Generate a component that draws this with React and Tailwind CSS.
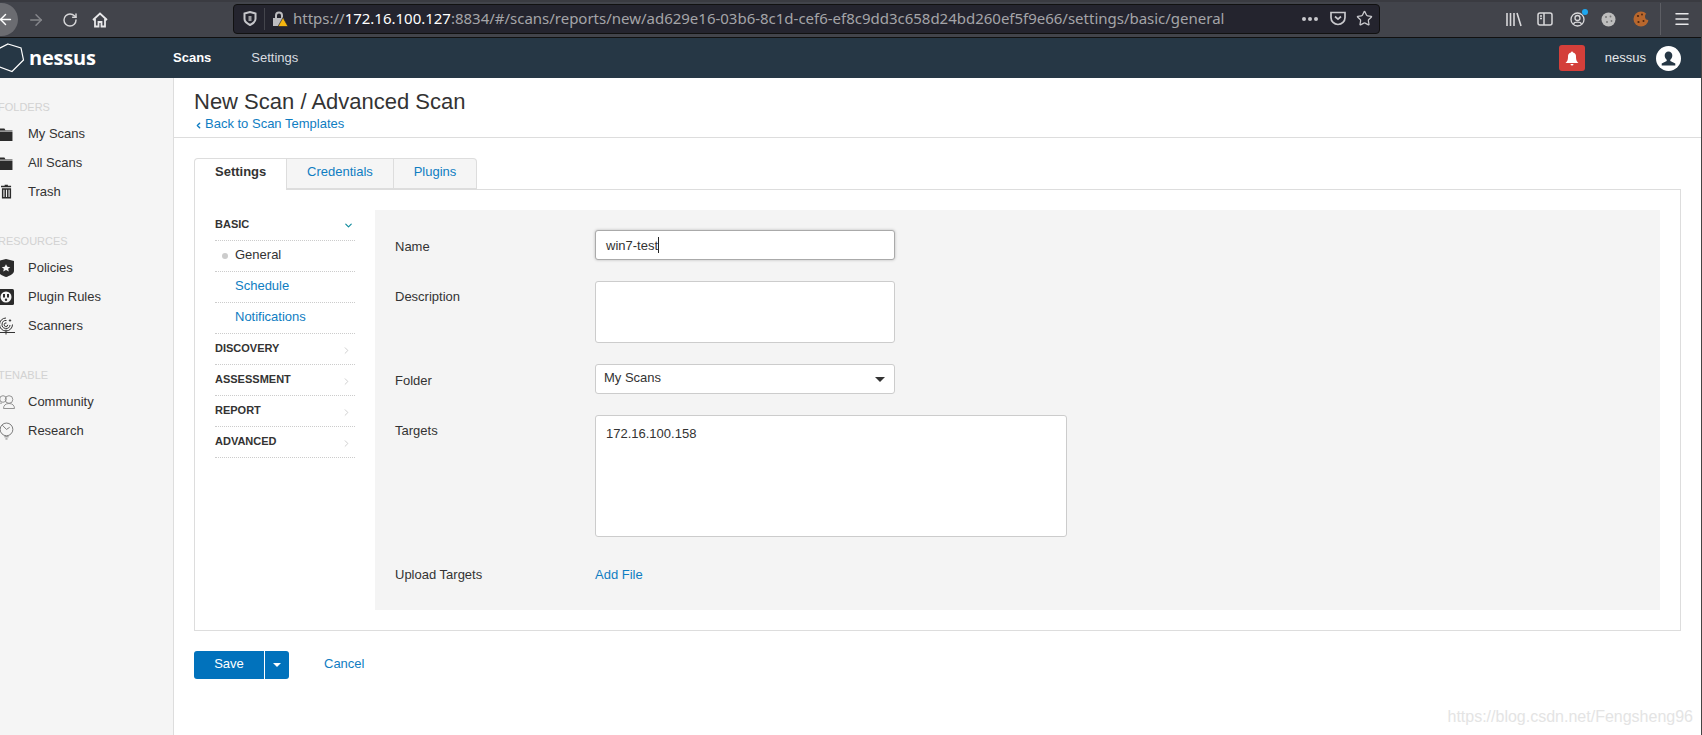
import React from 'react';
import { ArrowLeft, ArrowRight, RotateCw, Star, ChevronRight, ChevronDown, ChevronLeft, Menu } from 'lucide-react';

const font = "font-['Liberation_Sans',Arial,sans-serif]";

const HexLogo = () => (
  <svg width="25" height="30" viewBox="0 0 25 30" fill="none" stroke="#fff" strokeWidth="1.2">
    <path d="M8 1 L21 5 L23.5 17 L12 28.5 L-6 22 L-6 8 Z" />
  </svg>
);

const FolderIcon = () => (
  <svg width="14" height="14" viewBox="0 0 13 13" fill="#2b2b2b">
    <path d="M0 1.5h5l1 1.5h6.5v10H0z" />
    <rect x="0" y="3.4" width="13" height="0.8" fill="#f5f5f5" />
  </svg>
);

const TrashIcon = () => (
  <svg width="11" height="15" viewBox="0 0 12 15" fill="#2b2b2b">
    <path d="M4 0h3.500v1.200H11v1.600H0V1.200h4z" />
    <path d="M1 4h10v11H1zM2.600 5.500v8h1.200v-8zM5.400 5.500v8h1.200v-8zM8.200 5.500v8h1.200v-8z" fillRule="evenodd" />
  </svg>
);

const ShieldIcon = () => (
  <svg width="16" height="18" viewBox="0 0 13 17" preserveAspectRatio="none">
    <path d="M6.500 0 L13 2 V11 C13 14 9 16 6.500 17 C4 16 0 14 0 11 V2 Z" fill="#2b2b2b" />
    <path d="M6.500 5 L7.600 7.400 L10 7.700 L8.200 9.300 L8.800 11.800 L6.500 10.500 L4.200 11.800 L4.800 9.300 L3 7.700 L5.400 7.400 Z" fill="#f5f5f5" />
  </svg>
);

const PlugIcon = () => (
  <svg width="16" height="16" viewBox="0 0 16 16">
    <rect x="0" y="0" width="16" height="16" rx="1.500" fill="#2b2b2b" />
    <circle cx="8" cy="8" r="5.500" fill="#f5f5f5" />
    <rect x="5" y="5" width="2" height="3.500" fill="#2b2b2b" />
    <rect x="9" y="5" width="2" height="3.500" fill="#2b2b2b" />
    <circle cx="8" cy="10.800" r="1.200" fill="#2b2b2b" />
  </svg>
);

const RadarIcon = () => (
  <svg width="18" height="18" viewBox="0 0 18 18" fill="none" stroke="#333" strokeWidth="1">
    <path d="M9 1 A6.500 6.500 0 1 0 15.500 7.500" />
    <path d="M9.500 3.500 A4 4 0 1 0 13 8" />
    <path d="M9.500 6 A1.800 1.800 0 1 0 10.800 7.800" />
    <path d="M0 15.500h18M9 12.500v5" />
    <circle cx="13" cy="3.500" r="0.700" fill="#333" />
  </svg>
);

const PeopleIcon = () => (
  <svg width="18" height="14" viewBox="0 0 18 14" fill="none" stroke="#888" strokeWidth="0.900">
    <circle cx="6" cy="4" r="3.300" />
    <circle cx="12" cy="4.500" r="3.800" />
    <path d="M0.500 12.500c0-3 2-4.500 4.500-4.500M6.500 13.500c0-3 2-5 5.500-5s5.500 2 5.500 5z" />
  </svg>
);

const BulbIcon = () => (
  <svg width="15" height="18" viewBox="0 0 14 17" fill="none" stroke="#777" strokeWidth="0.900">
    <circle cx="7" cy="7" r="6" />
    <path d="M3 3l4 4 3-2M5 14h4M6 16h2" />
  </svg>
);

const SidebarHeading = ({ children, className }) => (
  <div className={`text-[11px] leading-4 text-[#d2d2d2] -ml-[2px] ${className}`}>{children}</div>
);

const SidebarItem = ({ icon, label }) => (
  <div className="flex items-center h-[29px] text-[13px] text-[#333]">
    <span className="w-[28px] -ml-[8px] flex justify-center items-center shrink-0">{icon}</span>
    <span className="ml-[8px]">{label}</span>
  </div>
);

const MenuHead = ({ label, open }) => (
  <div className="h-[31px] flex items-center justify-between border-b border-dotted border-[#ccc] font-bold text-[11px] text-[#333]">
    <span className="-mt-[1px]">{label}</span>
    {open
      ? <ChevronDown size={11} strokeWidth={2.5} className="text-[#0e8a9c] mr-[1px] mt-[1px]" />
      : <ChevronRight size={11} strokeWidth={2} className="text-[#ccc] mr-[3px] mt-[2px]" />}
  </div>
);

const MenuItem = ({ label, active }) => (
  <div className={`h-[31px] flex items-center border-b border-dotted border-[#ccc] text-[13px] ${active ? 'text-[#333]' : 'text-[#0f7dc2]'}`}>
    <span className="w-[20px] flex justify-center">
      {active && <span className="w-[6px] h-[6px] rounded-full bg-[#ccc]" />}
    </span>
    <span className="-mt-[3px]">{label}</span>
  </div>
);

const Tab = ({ label, active, w }) => (
  <div className={`${w} h-[31px] flex items-center justify-center text-[13px] border-t border-r border-[#ddd] first:border-l first:rounded-tl first:justify-start last:rounded-tr ${active ? 'bg-white font-bold text-[#333] h-[32px] -mb-px z-10 pl-[20px]' : 'bg-[#f5f5f5] text-[#0f7dc2] border-b'}`}>
    <span className={active ? '-mt-[5px]' : '-mt-[3px]'}>{label}</span>
  </div>
);

const FormRow = ({ label, mb, labelClass = 'pt-[7px]', children }) => (
  <div className={`flex ${mb}`}>
    <div className={`w-[200px] text-[13px] text-[#333] ${labelClass}`}>{label}</div>
    {children}
  </div>
);

export default function App() {
  return (
    <div className={`${font} w-full h-[735px] overflow-hidden flex flex-col bg-white border-r border-[#444]`}>
      {/* Firefox toolbar */}
      <div className="h-[38px] shrink-0 bg-[#42444b] border-t-2 border-b border-t-[#3a3b41] border-b-[#111] flex items-center text-[#d6d6d8]">
        <div className="w-[36px] h-[33px] -ml-[18px] rounded-full bg-[#6b6c71] flex items-center justify-end pr-[7px] shrink-0 -mt-[1px]">
          <ArrowLeft size={17} className="text-white -mr-[3px]" />
        </div>
        <ArrowRight size={18} className="text-[#85868b] ml-[9px]" />
        <RotateCw size={16} strokeWidth={2.2} className="ml-[17px]" />
        <svg width="16" height="16" viewBox="0 0 16 16" fill="none" stroke="#e8e8ea" strokeWidth="1.800" className="ml-[14px]">
          <path d="M1 8 L8 1.500 L15 8 M3 7v7.500h3.500V10h3v4.500H13V7" />
        </svg>
        <div className="ml-[125px] w-[1147px] h-[30px] -mt-[2px] bg-[#24242e] border border-[#111] rounded-[4px] flex items-center shrink-0">
          <svg width="14" height="15" viewBox="0 0 14 15" className="ml-[9px] shrink-0" fill="none" stroke="#c6c6ca" strokeWidth="2">
            <path d="M1.500 2.500 L7 1 L12.500 2.500 V8 C12.500 11 9 13 7 14 C5 13 1.500 11 1.500 8 Z" />
            <path d="M7 5v5" strokeWidth="3" stroke="#9a9a9e" />
          </svg>
          <span className="ml-[7px] w-px h-[22px] bg-[#44454c]" />
          <span className="relative ml-[7px] w-[16px] h-[16px] shrink-0">
            <svg width="16" height="16" viewBox="0 0 16 16">
              <path d="M3 7V4.500a4 4 0 0 1 8 0V7h1v8H1V7z M5 7h4V4.500a2 2 0 0 0-4 0z" fill="#bdbdc0" fillRule="evenodd" />
              <path d="M11 6.500 L16 15.500 H6 Z" fill="#f5b50f" stroke="#24242e" strokeWidth="0.700" />
            </svg>
          </span>
          <div className="ml-[5px] font-['Noto_Sans',sans-serif] text-[15px] tracking-[-0.01px] text-[#a4a4a8] whitespace-nowrap">
            https://<span className="text-white">172.16.100.127</span>:8834/#/scans/reports/new/ad629e16-03b6-8c1d-cef6-ef8c9dd3c658d24bd260ef5f9e66/settings/basic/general
          </div>
          <div className="ml-auto flex items-center shrink-0">
            <span className="flex gap-[2px] mr-[12px]">
              <i className="w-[4px] h-[4px] rounded-full bg-[#c8c8cc]" />
              <i className="w-[4px] h-[4px] rounded-full bg-[#c8c8cc]" />
              <i className="w-[4px] h-[4px] rounded-full bg-[#c8c8cc]" />
            </span>
            <svg width="16" height="15" viewBox="0 0 16 15" fill="none" stroke="#c8c8cc" strokeWidth="1.700" className="mr-[10px]">
              <path d="M1 1.500h14v5a7 7 0 0 1-14 0z" />
              <path d="M5 5.500l3 2.700 3-2.700" />
            </svg>
            <Star size={17} strokeWidth={1.8} className="text-[#c8c8cc] mr-[6px]" />
          </div>
        </div>
        <div className="flex-1 flex items-center justify-end relative h-[32px]">
          <svg width="16" height="15" viewBox="0 0 16 15" fill="none" stroke="#d8d8da" strokeWidth="1.600" className="absolute left-[126px] top-[8px]">
            <path d="M1 1v13M4.500 1v13M8 1v13M11 1l4 13" />
          </svg>
          <svg width="16" height="14" viewBox="0 0 16 14" fill="none" stroke="#d8d8da" strokeWidth="1.500" className="absolute left-[157px] top-[8px]">
            <rect x="1" y="1" width="14" height="12" rx="2" />
            <path d="M7 1v12M3 4h2M3 6.500h2" />
          </svg>
          <svg width="15" height="15" viewBox="0 0 15 15" fill="none" stroke="#d8d8da" strokeWidth="1.300" className="absolute left-[190px] top-[8px]">
            <circle cx="7.500" cy="7.500" r="6.500" />
            <circle cx="7.500" cy="6" r="2.500" />
            <path d="M3.500 12c1-2.500 7-2.500 8 0" />
          </svg>
          <span className="absolute left-[202px] top-[5px] w-[6px] h-[6px] rounded-full bg-[#1ea7ef]" />
          <svg width="15" height="15" viewBox="0 0 15 15" className="absolute left-[221px] top-[8px]">
            <circle cx="7.500" cy="7.500" r="7" fill="#bdbdbd" />
            <circle cx="5" cy="5" r="1" fill="#777" />
            <circle cx="9.500" cy="4.500" r="0.900" fill="#777" />
            <circle cx="6" cy="10" r="1" fill="#777" />
            <circle cx="10.500" cy="9" r="0.900" fill="#777" />
          </svg>
          <svg width="16" height="16" viewBox="0 0 16 16" className="absolute left-[253px] top-[7px]">
            <circle cx="8" cy="8" r="7.500" fill="#b8672d" />
            <circle cx="15.500" cy="5.500" r="3.500" fill="#42444b" />
            <circle cx="5" cy="5" r="1.100" fill="#4a2510" />
            <circle cx="9" cy="3.500" r="0.900" fill="#4a2510" />
            <circle cx="5.500" cy="11" r="1.100" fill="#4a2510" />
            <circle cx="10.500" cy="10" r="1" fill="#4a2510" />
          </svg>
          <span className="w-px h-[32px] bg-[#5d5e64] mr-[40px] -mt-[1px]" />
          <Menu size={18} strokeWidth={2} className="text-[#e8e8ea] mr-[10px] absolute right-0 top-[6px]" />
        </div>
      </div>

      {/* Nessus nav bar */}
      <div className="h-[40px] shrink-0 bg-[#263745] flex items-center relative">
        <div className="w-[173px] flex items-center shrink-0">
          <HexLogo />
          <span className="font-['Open_Sans',sans-serif] font-bold text-[20px] leading-none text-white ml-[4px] -mt-[1px] tracking-[-0.2px]">nessus</span>
        </div>
        <span className="text-[13px] font-bold text-white -mt-[1px]">Scans</span>
        <span className="text-[13px] text-[#d9dde0] ml-[40px]">Settings</span>
        <div className="ml-auto flex items-center mr-[20px]">
          <div className="w-[26px] h-[26px] rounded-[3px] bg-[#d43f3a] flex items-center justify-center">
            <svg width="14" height="15" viewBox="0 0 14 15" fill="#fff">
              <path d="M7 0.500a1 1 0 0 1 1 1 4 4 0 0 1 3 4c0 4 1 5 2.500 6.500h-13C2 10.500 3 9.500 3 5.500a4 4 0 0 1 3-4 1 1 0 0 1 1-1z" />
              <path d="M5.500 13h3a1.500 1.500 0 0 1-3 0z" />
            </svg>
          </div>
          <span className="text-[13px] text-[#e6e9eb] ml-[20px]">nessus</span>
          <div className="w-[25px] h-[25px] rounded-full bg-white ml-[10px] flex items-center justify-center overflow-hidden">
            <svg width="15" height="15" viewBox="0 0 15 15" fill="#263745">
              <path d="M7.500 0.500a3.800 3.800 0 0 1 3.800 4c0 2-1 3.500-2 4.200v1.300l5 2.500v2H0.700v-2l5-2.500V8.700c-1-0.700-2-2.200-2-4.200a3.800 3.800 0 0 1 3.800-4z" />
            </svg>
          </div>
        </div>
      </div>

      <div className="flex-1 flex min-h-0">
        {/* Left sidebar */}
        <aside className="w-[174px] shrink-0 bg-[#f5f5f5] border-r border-[#ddd] pt-[21px]">
          <SidebarHeading className="mb-[4px]">FOLDERS</SidebarHeading>
          <SidebarItem icon={<FolderIcon />} label="My Scans" />
          <SidebarItem icon={<FolderIcon />} label="All Scans" />
          <SidebarItem icon={<TrashIcon />} label="Trash" />
          <SidebarHeading className="mt-[27px] mb-[4px]">RESOURCES</SidebarHeading>
          <SidebarItem icon={<ShieldIcon />} label="Policies" />
          <SidebarItem icon={<PlugIcon />} label="Plugin Rules" />
          <SidebarItem icon={<RadarIcon />} label="Scanners" />
          <SidebarHeading className="mt-[27px] mb-[4px]">TENABLE</SidebarHeading>
          <SidebarItem icon={<PeopleIcon />} label="Community" />
          <SidebarItem icon={<BulbIcon />} label="Research" />
        </aside>

        {/* Main content */}
        <main className="flex-1 min-w-0 relative">
          <div className="h-[60px] border-b border-[#ddd] pl-[20px] pt-[10px]">
            <h1 className="text-[22px] leading-[28px] text-[#333]">New Scan / Advanced Scan</h1>
            <div className="flex items-center text-[13px] leading-[16px] text-[#0f7dc2]">
              <ChevronLeft size={9} strokeWidth={4} className="mr-[2px] mt-[2px]" />
              Back to Scan Templates
            </div>
          </div>

          <div className="pl-[20px] pr-[20px] pt-[20px]">
            <div className="flex">
              <Tab label="Settings" active w="w-[93px]" />
              <Tab label="Credentials" w="w-[107px]" />
              <Tab label="Plugins" w="w-[83px]" />
            </div>
            <div className="border border-[#ddd] h-[442px] pl-[20px] pr-[20px] pt-[20px] flex">
              {/* Section menu */}
              <div className="w-[140px] shrink-0">
                <MenuHead label="BASIC" open />
                <MenuItem label="General" active />
                <MenuItem label="Schedule" />
                <MenuItem label="Notifications" />
                <MenuHead label="DISCOVERY" />
                <MenuHead label="ASSESSMENT" />
                <MenuHead label="REPORT" />
                <MenuHead label="ADVANCED" />
              </div>

              {/* Form panel */}
              <div className="ml-[20px] flex-1 h-[400px] bg-[#f4f4f4] pl-[20px] pt-[20px]">
                <FormRow label="Name" mb="mb-[21px]">
                  <div className="w-[300px] h-[30px] bg-white border border-[#aaa] rounded-[3px] shadow-[0_0_3px_rgba(0,0,0,0.25)] pl-[10px] text-[13px] leading-[27px] text-[#333] flex items-center">
                    win7-test<span className="w-px h-[16px] bg-[#222]" />
                  </div>
                </FormRow>
                <FormRow label="Description" mb="mb-[21px]" labelClass="pt-[6px]">
                  <div className="w-[300px] h-[62px] bg-white border border-[#ccc] rounded-[3px]" />
                </FormRow>
                <FormRow label="Folder" mb="mb-[21px]">
                  <div className="w-[300px] h-[30px] bg-white border border-[#ccc] rounded-[3px] pl-[8px] pr-[9px] text-[13px] text-[#333] flex items-center justify-between">
                    <span className="-mt-[3px]">My Scans</span>
                    <span className="w-0 h-0 border-x-[5px] border-x-transparent border-t-[5px] border-t-[#333] mt-[1px]" />
                  </div>
                </FormRow>
                <FormRow label="Targets" mb="mb-[28px]" labelClass="pt-[6px]">
                  <div className="w-[472px] h-[122px] bg-white border border-[#ccc] rounded-[3px] pl-[10px] pt-[9px] text-[13px] leading-[17px] text-[#333]">
                    172.16.100.158
                  </div>
                </FormRow>
                <FormRow label="Upload Targets" mb="" labelClass="pt-0">
                  <span className="text-[13px] text-[#0f7dc2]">Add File</span>
                </FormRow>
              </div>
            </div>

            <div className="flex items-center mt-[20px]">
              <div className="w-[70px] h-[28px] pb-[3px] bg-[#0172bc] rounded-l-[3px] text-white text-[13px] flex items-center justify-center">Save</div>
              <div className="w-[24px] h-[28px] ml-px bg-[#0172bc] rounded-r-[3px] flex items-center justify-center">
                <span className="w-0 h-0 border-x-[4px] border-x-transparent border-t-[4px] border-t-white" />
              </div>
              <span className="ml-[35px] -mt-[3px] text-[13px] text-[#0f7dc2]">Cancel</span>
            </div>
          </div>

          {/* CSDN watermark */}
          <div className="absolute right-[8px] bottom-[7px] text-[16px] leading-[22px] text-[#e4e4e4]">https://blog.csdn.net/Fengsheng96</div>
        </main>
      </div>
    </div>
  );
}
